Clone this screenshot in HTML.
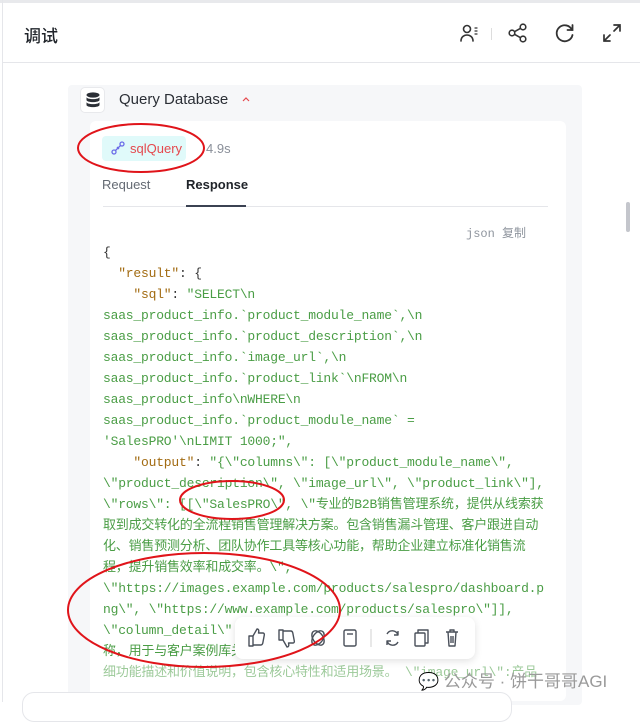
<!DOCTYPE html>
<html><head><meta charset="utf-8"><style>
*{margin:0;padding:0;box-sizing:border-box}
body{width:640px;height:702px;overflow:hidden;background:#fff;font-family:"Liberation Sans","Noto Sans CJK SC",sans-serif;position:relative}
.top{position:absolute;left:0;top:0;width:640px;height:3px;background:#e8e9ec}
.lb{position:absolute;left:2px;top:0;width:1px;height:702px;background:#e5e6ea}
.hdr{position:absolute;left:3px;top:3px;width:637px;height:60px;border-bottom:1px solid #e5e6ea}
.title{position:absolute;left:24px;top:22px;font-size:17px;color:#1f2329;font-weight:500}
.ico{position:absolute;top:22px;width:22px;height:22px}
.gray{position:absolute;left:68px;top:85px;width:514px;height:620px;background:#f6f7f9;border-radius:4px}
.white{position:absolute;left:90px;top:121px;width:476px;height:580px;background:#fff;border-radius:6px}
.code{position:absolute;left:103px;top:242px;font-family:"Liberation Mono","Noto Sans CJK SC",monospace;font-size:13px;line-height:21px;color:#4a9d45;letter-spacing:-0.2px;white-space:pre}
.k{color:#a26b12}.p{color:#333}
</style></head><body>
<div class="top"></div><div class="lb"></div>
<div class="hdr"></div>
<div class="title">调试</div>
<svg class="ico" style="left:458px" viewBox="0 0 22 22" fill="none" stroke="#333" stroke-width="1.6" stroke-linecap="round"><circle cx="9" cy="7" r="3.5"/><path d="M3 19c0-4 3-6 6-6s6 2 6 6"/><path d="M17 6h2M17 9h2M17 12h2" stroke-width="1.2"/></svg>
<div style="position:absolute;left:491px;top:28px;width:1px;height:12px;background:#ddd"></div>
<svg class="ico" style="left:507px" viewBox="0 0 22 22" fill="none" stroke="#333" stroke-width="1.6"><circle cx="5" cy="11" r="2.8"/><circle cx="16" cy="5" r="2.8"/><circle cx="16" cy="17" r="2.8"/><path d="M7.5 9.7l6-3.4M7.5 12.3l6 3.4"/></svg>
<svg class="ico" style="left:554px" viewBox="0 0 22 22" fill="none" stroke="#333" stroke-width="1.8" stroke-linecap="round"><path d="M18 8A8 8 0 1 0 18.5 13"/><path d="M18.5 3v5h-5"/></svg>
<svg class="ico" style="left:601px" viewBox="0 0 22 22" fill="none" stroke="#333" stroke-width="1.7" stroke-linecap="round"><path d="M13 3h6v6M19 3l-6 6M9 19H3v-6M3 19l6-6"/></svg>

<div class="gray"></div>
<div style="position:absolute;left:80px;top:87px;width:25px;height:26px;background:#fff;border:1px solid #e8e9ec;border-radius:5px"></div>
<svg style="position:absolute;left:86px;top:92px" width="14" height="16" viewBox="0 0 14 16"><ellipse cx="7" cy="3" rx="6.5" ry="2.6" fill="#2b2f36"/><path d="M0.5 5c0 2.8 13 2.8 13 0v3c0 2.8-13 2.8-13 0z" fill="#2b2f36"/><path d="M0.5 10c0 2.8 13 2.8 13 0v3c0 2.8-13 2.8-13 0z" fill="#2b2f36"/></svg>
<div style="position:absolute;left:119px;top:91px;font-size:15px;color:#2b2f36">Query Database</div>
<svg style="position:absolute;left:241px;top:96px" width="10" height="7" viewBox="0 0 10 7" fill="none" stroke="#e5484d" stroke-width="1.2"><path d="M2 5l3-3 3 3"/></svg>
<div class="white"></div>
<div style="position:absolute;left:102px;top:136px;width:84px;height:25px;background:#e0fafa;border-radius:4px"></div>
<svg style="position:absolute;left:111px;top:141px" width="14" height="14" viewBox="0 0 14 14" fill="none" stroke="#6b6be8" stroke-width="1.3"><circle cx="3" cy="11" r="2"/><circle cx="11" cy="3" r="2"/><path d="M4.5 9.5l5-5M6 6l2 2"/></svg>
<div style="position:absolute;left:130px;top:141px;font-size:13px;color:#e5484d">sqlQuery</div>
<div style="position:absolute;left:206px;top:141px;font-size:13px;color:#8a8f99">4.9s</div>
<div style="position:absolute;left:102px;top:177px;font-size:13px;color:#646a73">Request</div>
<div style="position:absolute;left:186px;top:177px;font-size:13px;color:#1f2329;font-weight:bold">Response</div>
<div style="position:absolute;left:103px;top:206px;width:445px;height:1px;background:#e5e6ea"></div>
<div style="position:absolute;left:186px;top:205px;width:60px;height:2px;background:#3b4252"></div>
<div style="position:absolute;left:626px;top:202px;width:4px;height:30px;background:#c4c6cc;border-radius:2px"></div>
<div style="position:absolute;left:466px;top:224px;font-family:'Liberation Mono','Noto Sans CJK SC',monospace;font-size:12px;color:#8f959e">json 复制</div>
<div class="code"><span class="p">{</span>
  <span class="k">"result"</span><span class="p">: {</span>
    <span class="k">"sql"</span><span class="p">: </span>"SELECT\n
saas_product_info.`product_module_name`,\n
saas_product_info.`product_description`,\n
saas_product_info.`image_url`,\n
saas_product_info.`product_link`\nFROM\n
saas_product_info\nWHERE\n
saas_product_info.`product_module_name` =
'SalesPRO'\nLIMIT 1000;",
    <span class="k">"output"</span><span class="p">: </span>"{\"columns\": [\"product_module_name\",
\"product_description\", \"image_url\", \"product_link\"],
\"rows\": [[\"SalesPRO\", \"专业的B2B销售管理系统，提供从线索获
取到成交转化的全流程销售管理解决方案。包含销售漏斗管理、客户跟进自动
化、销售预测分析、团队协作工具等核心功能，帮助企业建立标准化销售流
程，提升销售效率和成交率。\",
\"https://images.example.com/products/salespro/dashboard.p
ng\", \"https://www.example.com/products/salespro\"]],
\"column_detail\": \"product_module_name: 产品模块
称，用于与客户案例库关联查询、
<span style="opacity:.55">细功能描述和价值说明，包含核心特性和适用场景。 \"image_url\":产品</span></div>
<div style="position:absolute;left:235px;top:617px;width:240px;height:42px;background:#fff;border-radius:8px;box-shadow:0 2px 8px rgba(0,0,0,.12)"></div>
<svg style="position:absolute;left:235px;top:617px" width="240" height="42" viewBox="0 0 240 42" fill="none" stroke="#4a505a" stroke-width="1.4" stroke-linejoin="round">
<path d="M14 19h4v10h-4zM18 19l4-7c2 0 2 2 1.5 4h4.5c1 0 1.5 1 1.3 2l-1.5 8c-.2 1-1 2-2 2H18"/>
<path d="M44 23h4v-10h-4zM48 23l4 7c2 0 2-2 1.5-4h4.5c1 0 1.5-1 1.3-2l-1.5-8c-.2-1-1-2-2-2H48"/>
<ellipse cx="83" cy="21" rx="5" ry="8" transform="rotate(35 83 21)"/><ellipse cx="83" cy="21" rx="5" ry="8" transform="rotate(-35 83 21)"/>
<rect x="109" y="13" width="12" height="16" rx="1.5"/><path d="M112 17h6"/>
<path d="M136 12v18" stroke="#ddd"/>
<path d="M152 17a6 6 0 0 1 11 1M163 25a6 6 0 0 1-11-1M163 14v4h-4M152 28v-4h4"/>
<rect x="180" y="16" width="10" height="13" rx="1"/><path d="M183 16v-3h10v13h-3"/>
<path d="M211 15h12M215 15v-2h4v2M213 15l1 14h6l1-14M216 19v7M218 19v7"/>
</svg>
<div style="position:absolute;left:418px;top:667px;font-size:17px;color:#9a9a9a">💬 公众号 · 饼干哥哥AGI</div>
<div style="position:absolute;left:22px;top:692px;width:490px;height:30px;border:1px solid #e5e6ea;border-radius:12px;background:#fff"></div>
<svg style="position:absolute;left:0;top:0" width="640" height="702" fill="none" stroke="#e0141a" stroke-width="2">
<ellipse cx="141" cy="148" rx="63" ry="24"/>
<ellipse cx="232" cy="500" rx="52" ry="19"/>
<ellipse cx="204" cy="610" rx="136" ry="57"/>
</svg>
</body></html>
